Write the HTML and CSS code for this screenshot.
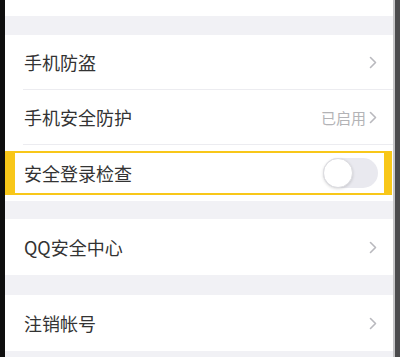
FILE: index.html
```html
<!DOCTYPE html>
<html lang="zh-CN">
<head>
<meta charset="utf-8">
<link rel="stylesheet" href="styles.css">
</head>
<body>
<div class="screen">
  <div class="edge-left"></div>
  <div class="main">
    <div class="top-white"></div>
    <div class="gap g19"></div>
    <div class="row sep">
      <span class="label">手机防盗</span>
      <svg class="chev" viewBox="0 0 8 13" width="8" height="13"><polyline points="1.5,1.5 6.5,6.5 1.5,11.5" fill="none" stroke="#b9b9be" stroke-width="1.6" stroke-linecap="round" stroke-linejoin="round"/></svg>
    </div>
    <div class="row sep">
      <span class="label">手机安全防护</span>
      <span class="right"><span class="status">已启用</span><svg class="chev" viewBox="0 0 8 13" width="8" height="13"><polyline points="1.5,1.5 6.5,6.5 1.5,11.5" fill="none" stroke="#b9b9be" stroke-width="1.6" stroke-linecap="round" stroke-linejoin="round"/></svg></span>
    </div>
    <div class="row-hl">
      <div class="frame">
        <span class="label">安全登录检查</span>
        <span class="toggle"><span class="knob"></span></span>
      </div>
    </div>
    <div class="gap g18"></div>
    <div class="row">
      <span class="label">QQ安全中心</span>
      <svg class="chev" viewBox="0 0 8 13" width="8" height="13"><polyline points="1.5,1.5 6.5,6.5 1.5,11.5" fill="none" stroke="#b9b9be" stroke-width="1.6" stroke-linecap="round" stroke-linejoin="round"/></svg>
    </div>
    <div class="gap g20"></div>
    <div class="row">
      <span class="label">注销帐号</span>
      <svg class="chev" viewBox="0 0 8 13" width="8" height="13"><polyline points="1.5,1.5 6.5,6.5 1.5,11.5" fill="none" stroke="#b9b9be" stroke-width="1.6" stroke-linecap="round" stroke-linejoin="round"/></svg>
    </div>
    <div class="gap rest"></div>
  </div>
  <div class="edge-right"><div class="er-light"></div><div class="er-dark"></div></div>
</div>
</body>
</html>
```
FILE: styles.css
```css
html, body {
  margin: 0;
  padding: 0;
  background: #ffffff;
}
body {
  width: 400px;
  height: 357px;
  overflow: hidden;
  font-family: "Noto Sans CJK SC", "Noto Sans", sans-serif;
}
.screen {
  display: flex;
  width: 400px;
  height: 357px;
}
.edge-left {
  width: 5px;
  background: #0e0e0e;
  flex: none;
}
.edge-right {
  width: 7px;
  flex: none;
  display: flex;
}
.er-light {
  width: 2px;
  background: #c4c4c6;
}
.er-dark {
  flex: 1;
  background: #4b4b4d;
}
.main {
  flex: 1;
  display: flex;
  flex-direction: column;
  background: #ffffff;
}
.top-white {
  height: 16px;
  flex: none;
}
.gap {
  background: #f1f1f5;
  flex: none;
}
.g19 { height: 19px; }
.g18 { height: 18px; }
.g20 { height: 20px; }
.rest { flex: 1; }
.row {
  height: 56px;
  flex: none;
  display: flex;
  align-items: center;
  justify-content: space-between;
  padding: 0 16px 0 19px;
  position: relative;
  box-sizing: border-box;
}
.row.sep {
  height: 55px;
  border-bottom: 1px solid #ececf0;
  margin-left: 18px;
  padding-left: 1px;
}
.label {
  font-size: 18px;
  color: #333333;
  letter-spacing: 0;
}
.right {
  display: flex;
  align-items: center;
  gap: 3px;
}
.status {
  font-size: 15px;
  color: #b3b3b6;
}
.chev {
  display: block;
}
.row-hl {
  height: 56px;
  flex: none;
  padding: 6px 1px 6px 0;
  box-sizing: border-box;
}
.frame {
  height: 100%;
  box-sizing: border-box;
  border-style: solid;
  border-color: #f8c719;
  border-width: 2px 8px 2px 10px;
  display: flex;
  align-items: center;
  justify-content: space-between;
  padding: 0 6px 0 9px;
}
.toggle {
  width: 55px;
  height: 30px;
  border-radius: 15px;
  background: #e9e9ef;
  display: flex;
  align-items: center;
}
.knob {
  width: 30px;
  height: 30px;
  border-radius: 50%;
  background: #ffffff;
  box-sizing: border-box;
  border: 1px solid #dcdce0;
  box-shadow: 0 1px 3px rgba(0,0,0,0.15);
}
```
